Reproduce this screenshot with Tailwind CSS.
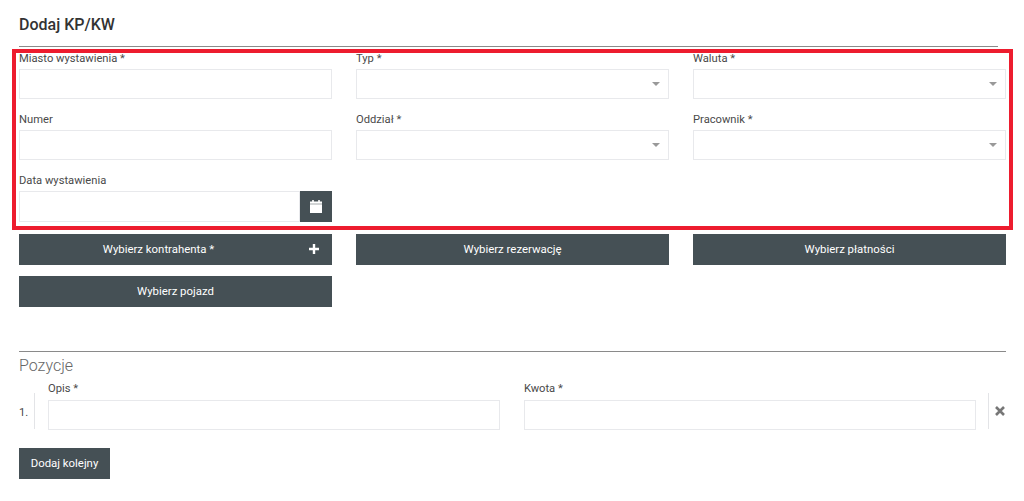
<!DOCTYPE html>
<html lang="pl">
<head>
  <meta charset="UTF-8" />
  <title>Dodaj KP/KW</title>
  <script src="https://cdn.jsdelivr.net/npm/@tailwindcss/browser@4"></script>
</head>
<body class="relative h-[501px] overflow-hidden bg-white font-['Roboto',sans-serif] text-[#4a4a4a]">
  <div class="pl-[19px] pr-[18px] pt-[14px]">
    <h1 class="h-[22px] text-[16px] leading-[22px] font-medium text-[#333]">Dodaj KP/KW</h1>
    <div class="mt-[10px] mr-[8px] h-px bg-[#8a8a8a]"></div>

    <!-- main form -->
    <div class="mt-[4px] grid grid-cols-[313px_313px_313px] gap-x-[24px] gap-y-[13px]">
      <div>
        <label class="block h-[18px] text-[11.2px] leading-[16px]">Miasto wystawienia *</label>
        <input class="block h-[30px] w-full border border-[#e8e9ec] bg-white" />
      </div>
      <div>
        <label class="block h-[18px] text-[11.2px] leading-[16px]">Typ *</label>
        <div class="flex h-[30px] items-center justify-end border border-[#e8e9ec] pr-[8px]">
          <div class="h-0 w-0 border-x-[4px] border-t-[4px] border-x-transparent border-t-[#999]"></div>
        </div>
      </div>
      <div>
        <label class="block h-[18px] text-[11.2px] leading-[16px]">Waluta *</label>
        <div class="flex h-[30px] items-center justify-end border border-[#e8e9ec] pr-[8px]">
          <div class="h-0 w-0 border-x-[4px] border-t-[4px] border-x-transparent border-t-[#999]"></div>
        </div>
      </div>
      <div>
        <label class="block h-[18px] text-[11.2px] leading-[16px]">Numer</label>
        <input class="block h-[30px] w-full border border-[#e8e9ec] bg-white" />
      </div>
      <div>
        <label class="block h-[18px] text-[11.2px] leading-[16px]">Oddział *</label>
        <div class="flex h-[30px] items-center justify-end border border-[#e8e9ec] pr-[8px]">
          <div class="h-0 w-0 border-x-[4px] border-t-[4px] border-x-transparent border-t-[#999]"></div>
        </div>
      </div>
      <div>
        <label class="block h-[18px] text-[11.2px] leading-[16px]">Pracownik *</label>
        <div class="flex h-[30px] items-center justify-end border border-[#e8e9ec] pr-[8px]">
          <div class="h-0 w-0 border-x-[4px] border-t-[4px] border-x-transparent border-t-[#999]"></div>
        </div>
      </div>
      <div>
        <label class="block h-[18px] text-[11.2px] leading-[16px]">Data wystawienia</label>
        <div class="flex h-[31px]">
          <input class="block h-full min-w-0 flex-1 border border-[#e8e9ec] bg-white" />
          <div class="flex w-[32px] items-center justify-center bg-[#455055]">
            <svg width="12" height="13" viewBox="0 0 12 13" fill="#fff"><path d="M2.2 0h1.6v1.6H2.2zM8.2 0h1.6v1.6H8.2zM0 1.6h12v2.2H0zM0 4.3h12V13H0z"/></svg>
          </div>
        </div>
      </div>
    </div>

    <!-- pickers -->
    <div class="mt-[12px] grid grid-cols-[313px_313px_313px] gap-x-[24px] gap-y-[11px] text-[11.4px] font-normal text-white">
      <button class="relative h-[31px] bg-[#455055] pr-[34px]">Wybierz kontrahenta *
        <svg class="absolute right-[13px] top-[10px]" width="10" height="10" viewBox="0 0 10 10" fill="#fff"><path d="M3.8 0h2.4v3.8H10v2.4H6.2V10H3.8V6.2H0V3.8h3.8z"/></svg>
      </button>
      <button class="h-[31px] bg-[#455055]">Wybierz rezerwację</button>
      <button class="h-[31px] bg-[#455055]">Wybierz płatności</button>
      <button class="h-[31px] bg-[#455055]">Wybierz pojazd</button>
    </div>

    <div class="mt-[44px] h-px bg-[#8a8a8a]"></div>
    <h2 class="mt-[4px] h-[20px] text-[16px] leading-[20px] font-light text-[#666]">Pozycje</h2>

    <!-- positions -->
    <div class="mt-[6px] flex h-[49px]">
      <div class="flex w-[15px] items-end pb-[11px] text-[11.2px] leading-[14px]">1.</div>
      <div class="mt-[11px] h-[36px] w-px bg-[#e3e4e7]"></div>
      <div class="ml-[13px] flex gap-x-[24px]">
        <div class="w-[452px]">
          <label class="block h-[18px] text-[11.2px] leading-[14px]">Opis *</label>
          <input class="block h-[30px] w-full border border-[#e8e9ec] bg-white" />
        </div>
        <div class="w-[452px]">
          <label class="block h-[18px] text-[11.2px] leading-[14px]">Kwota *</label>
          <input class="block h-[30px] w-full border border-[#e8e9ec] bg-white" />
        </div>
      </div>
      <div class="ml-[12px] mt-[11px] h-[36px] w-px bg-[#e3e4e7]"></div>
      <div class="ml-[6px] mt-[24px]">
        <svg class="block" width="10" height="10" viewBox="0 0 10 10" fill="none" stroke="#777" stroke-width="2.6"><path d="M1 1l8 8M9 1l-8 8"/></svg>
      </div>
    </div>

    <button class="mt-[17px] block h-[31px] w-[91px] bg-[#455055] text-[11.4px] font-normal text-white">Dodaj kolejny</button>
  </div>

  <!-- red highlight drawn over the form -->
  <div class="pointer-events-none absolute left-[12px] top-[49px] h-[181px] w-[1001px] border-[4px] border-[#ed1c2e]"></div>
</body>
</html>
